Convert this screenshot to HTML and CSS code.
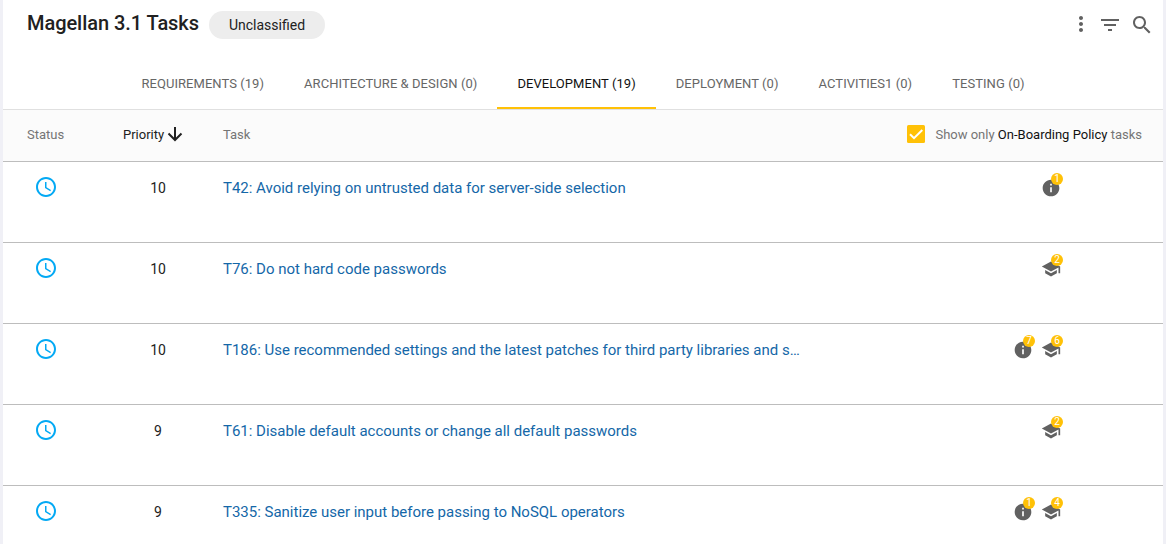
FILE: index.html
```
<!DOCTYPE html>
<html lang="en">
<head>
<meta charset="utf-8">
<title>Magellan 3.1 Tasks</title>
<link rel="stylesheet" href="styles.css">
</head>
<body>
<svg class="sprite" aria-hidden="true">
  <symbol id="clock" viewBox="0 0 24 24"><path d="M11.99 2C6.47 2 2 6.48 2 12s4.47 10 9.99 10C17.52 22 22 17.52 22 12S17.52 2 11.99 2zM12 20c-4.42 0-8-3.58-8-8s3.580-8 8-8 8 3.580 8 8-3.580 8-8 8zm.5-13H11v6l5.250 3.150.75-1.230-4.500-2.670z"/></symbol>
  <symbol id="info" viewBox="0 0 24 24"><path d="M12 2C6.48 2 2 6.48 2 12s4.480 10 10 10 10-4.480 10-10S17.520 2 12 2zm1 15h-2v-6h2v6zm0-8h-2V7h2v2z"/></symbol>
  <symbol id="school" viewBox="0 0 24 24"><path d="M5 13.180v4L12 21l7-3.820v-4L12 17l-7-3.820zM12 3L1 9l11 6 9-4.910V17h2V9L12 3z"/></symbol>
</svg>
<main class="card">
  <header class="topbar">
    <h1 class="title">Magellan 3.1 Tasks</h1>
    <span class="chip">Unclassified</span>
    <div class="actions">
      <svg class="icon more" viewBox="0 0 24 24"><path d="M12 8c1.100 0 2-.9 2-2s-.9-2-2-2-2 .9-2 2 .9 2 2 2zm0 2c-1.100 0-2 .9-2 2s.9 2 2 2 2-.9 2-2-.9-2-2-2zm0 6c-1.100 0-2 .9-2 2s.9 2 2 2 2-.9 2-2-.9-2-2-2z"/></svg>
      <svg class="icon" viewBox="0 0 24 24"><path d="M10 18h4v-2h-4v2zM3 6v2h18V6H3zm3 7h12v-2H6v2z"/></svg>
      <svg class="icon" viewBox="0 0 24 24"><path d="M15.500 14h-.79l-.28-.27C15.410 12.590 16 11.110 16 9.500 16 5.910 13.090 3 9.500 3S3 5.910 3 9.500 5.910 16 9.500 16c1.610 0 3.090-.59 4.230-1.570l.27.28v.79l5 4.990L20.490 19l-4.990-5zm-6 0C7.010 14 5 11.990 5 9.500S7.010 5 9.500 5 14 7.010 14 9.500 11.990 14 9.500 14z"/></svg>
    </div>
  </header>
  <nav class="tabs">
    <a class="tab">REQUIREMENTS (19)</a>
    <a class="tab">ARCHITECTURE &amp; DESIGN (0)</a>
    <a class="tab active">DEVELOPMENT (19)</a>
    <a class="tab">DEPLOYMENT (0)</a>
    <a class="tab">ACTIVITIES1 (0)</a>
    <a class="tab">TESTING (0)</a>
  </nav>
  <div class="row head">
    <span class="status-head">Status</span>
    <span class="priority-head">Priority<svg class="arrow" viewBox="0 0 16 16"><path d="M8 1v13M1.500 7.500L8 14l6.500-6.500"/></svg></span>
    <span>Task</span>
    <label class="filter">
      <svg class="check" viewBox="0 0 18 18"><rect width="18" height="18" rx="1.500"/><path d="M3 9.300l4 3.900L15.300 5"/></svg>
      <span>Show only <b>On-Boarding Policy</b> tasks</span>
    </label>
  </div>
  <div class="row item">
    <svg class="clock"><use href="#clock"/></svg><span class="priority">10</span>
    <a class="task">T42: Avoid relying on untrusted data for server-side selection</a>
    <div class="marks"><span class="mark"><svg><use href="#info"/></svg><i class="badge">1</i></span></div>
  </div>
  <div class="row item">
    <svg class="clock"><use href="#clock"/></svg><span class="priority">10</span>
    <a class="task">T76: Do not hard code passwords</a>
    <div class="marks"><span class="mark"><svg><use href="#school"/></svg><i class="badge">2</i></span></div>
  </div>
  <div class="row item">
    <svg class="clock"><use href="#clock"/></svg><span class="priority">10</span>
    <a class="task">T186: Use recommended settings and the latest patches for third party libraries and s…</a>
    <div class="marks"><span class="mark"><svg><use href="#info"/></svg><i class="badge">7</i></span><span class="mark"><svg><use href="#school"/></svg><i class="badge">6</i></span></div>
  </div>
  <div class="row item">
    <svg class="clock"><use href="#clock"/></svg><span class="priority">9</span>
    <a class="task">T61: Disable default accounts or change all default passwords</a>
    <div class="marks"><span class="mark"><svg><use href="#school"/></svg><i class="badge">2</i></span></div>
  </div>
  <div class="row item">
    <svg class="clock"><use href="#clock"/></svg><span class="priority">9</span>
    <a class="task">T335: Sanitize user input before passing to NoSQL operators</a>
    <div class="marks"><span class="mark"><svg><use href="#info"/></svg><i class="badge">1</i></span><span class="mark"><svg><use href="#school"/></svg><i class="badge">4</i></span></div>
  </div>
</main>
</body>
</html>
```
FILE: styles.css
```
* { box-sizing: border-box; }
body {
  margin: 0;
  height: 544px;
  overflow: hidden;
  padding: 0 3px;
  background: #f0f0f6;
  font-family: Roboto, sans-serif;
  font-size: 13px;
  color: #212121;
}
.sprite { display: none; }
.card { height: 544px; overflow: hidden; background: #fff; }

.topbar {
  display: flex;
  align-items: center;
  height: 58px;
  padding: 0 9px 8px 24px;
}
.title { margin: 0; width: 182px; font-size: 20px; font-weight: 500; line-height: 28px; white-space: nowrap; margin-top: -4px; letter-spacing: -0.05px; }
.chip {
  width: 116px;
  height: 28px;
  border-radius: 14px;
  background: #ededed;
  line-height: 28px;
  text-align: center;
  font-size: 14px;
}
.actions { display: flex; gap: 8px; margin-left: auto; }
.icon { width: 24px; height: 24px; fill: #616161; }
.more { margin-right: -3px; margin-top: -1px; }

.tabs {
  display: flex;
  justify-content: center;
  height: 52px;
  border-bottom: 1px solid #e0e0e0;
}
.tab {
  padding: 0 20px;
  line-height: 51px;
  height: 51px;
  color: #666;
  white-space: nowrap;
  letter-spacing: 0.055px;
}
.active { color: #111; border-bottom: 2px solid #ffc107; }

.row {
  display: grid;
  grid-template-columns: 96px 100px 1fr auto;
  padding-left: 24px;
  border-bottom: 1px solid #bdbdbd;
}
.head {
  height: 52px;
  align-items: center;
  background: #fbfbfb;
  color: #757575;
  padding-bottom: 2px;
}
.priority-head { display: flex; align-items: center; gap: 3px; color: #212121; }
.arrow { width: 16px; height: 16px; margin-top: -1px; fill: none; stroke: #212121; stroke-width: 2; }
.filter { display: flex; align-items: center; gap: 10px; padding-right: 21px; margin-top: -1px; }
.filter b { font-weight: 400; color: #111; }
.check { width: 18px; height: 18px; fill: #ffc107; }
.check path { fill: none; stroke: #fff; stroke-width: 2; }

.item { height: 81px; padding-top: 13px; align-items: start; }
.clock { width: 24px; height: 24px; margin-left: 7px; fill: #03a9f4; }
.priority { width: 70px; text-align: center; font-size: 14px; line-height: 26px; }
.task { font-size: 15px; line-height: 27px; color: #1467a8; white-space: nowrap; letter-spacing: -0.01px; }
.marks { display: flex; gap: 8px; padding: 3px 102px 0 0; }
.mark { position: relative; width: 20px; height: 20px; }
.mark svg { display: block; width: 20px; height: 20px; fill: #616161; }
.badge {
  position: absolute;
  left: 10px;
  top: -5px;
  width: 12px;
  height: 12px;
  border-radius: 50%;
  background: #ffc107;
  color: #fff;
  font-size: 10px;
  font-style: normal;
  line-height: 12px;
  text-align: center;
}
```
